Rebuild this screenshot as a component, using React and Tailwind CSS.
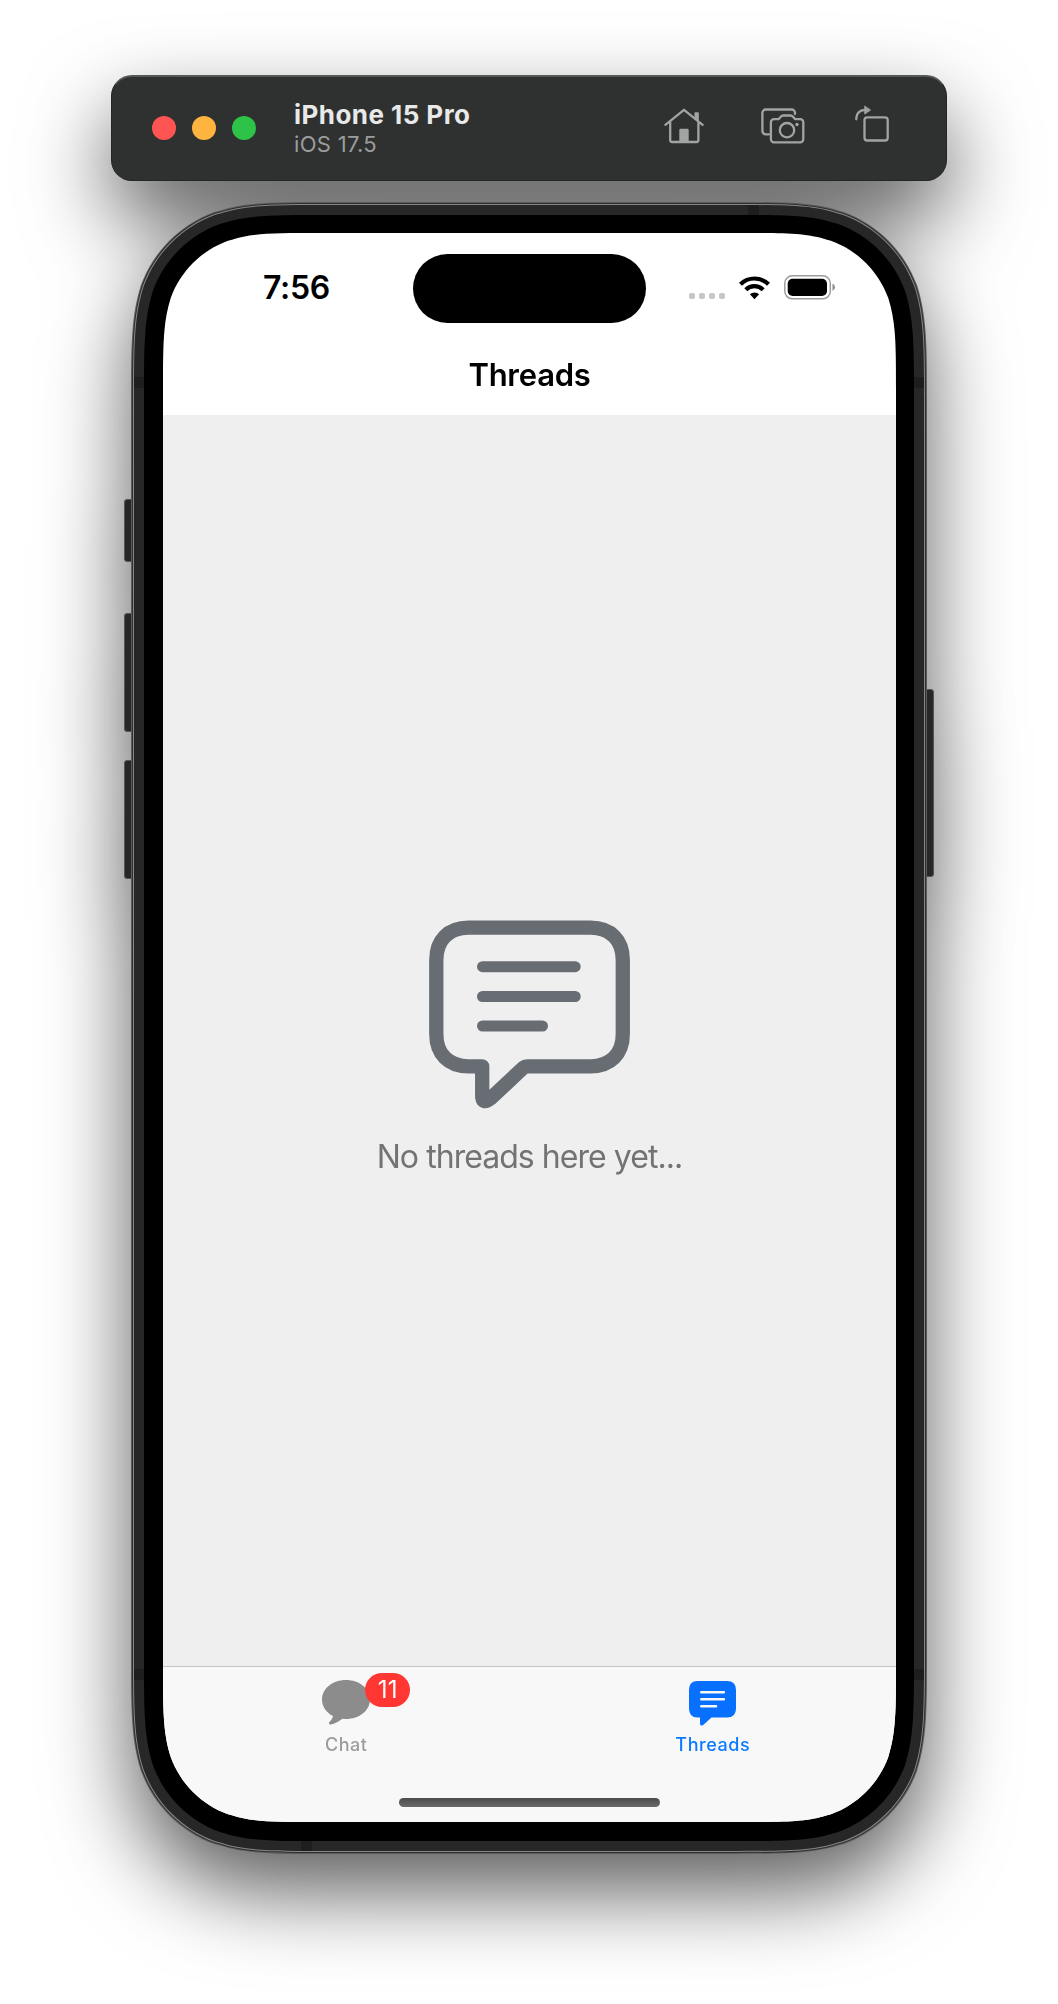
import React from "react";

// Continuous-curvature ("squircle") rounded rectangle path.
function squircle(w, h, r) {
  const seq = [
    [1.52866, 0], [1.08849, 0], [0.8684, 0], [0.66993, 0.06549],
    [0.63149, 0.07491],
    [0.37282, 0.16906], [0.16906, 0.37282], [0.07491, 0.63149],
    [0, 0.8684], [0, 1.08849], [0, 1.52866],
  ];
  const f = (n) => n.toFixed(2);
  const corner = (map, reverse) => {
    const p = (reverse ? [...seq].reverse() : seq).map(([a, b]) => map(a * r, b * r));
    const s = p.map(([x, y]) => `${f(x)} ${f(y)}`);
    return reverse
      ? `${s[0]}C${s[1]} ${s[2]} ${s[3]}C${s[4]} ${s[5]} ${s[6]}L${s[7]}C${s[8]} ${s[9]} ${s[10]}`
      : `${s[0]}C${s[1]} ${s[2]} ${s[3]}L${s[4]}C${s[5]} ${s[6]} ${s[7]}C${s[8]} ${s[9]} ${s[10]}`;
  };
  const tr = corner((a, b) => [w - a, b], false);
  const br = corner((a, b) => [w - a, h - b], true);
  const bl = corner((a, b) => [a, h - b], false);
  const tl = corner((a, b) => [a, b], true);
  return `path("M${tr}L${br}L${bl}L${tl}Z")`;
}

const shape = (w, h, r) => ({ clipPath: squircle(w, h, r) });

function HomeIcon() {
  return (
    <svg width="40" height="36" viewBox="0 0 40 36" fill="none" stroke="#a2a3a3" strokeWidth="2.300" strokeLinecap="round" strokeLinejoin="round">
      <path d="M1.400 16.800 20 1.800 38.600 16.800M6.200 14v18a2 2 0 0 0 2 2h24.200a2 2 0 0 0 2-2V14" />
      <path d="M31.300 10.500V5.200h2.700v7.500" fill="#a2a3a3" strokeWidth="1.700" />
      <path d="M16.500 20.800h7q1.200 0 1.200 1.200V34.500h-9.400V22q0-1.200 1.200-1.200Z" fill="#a2a3a3" stroke="none" />
    </svg>
  );
}

function ScreenshotIcon() {
  return (
    <svg width="44" height="36" viewBox="0 0 44 36" fill="none" stroke="#a2a3a3" strokeWidth="2.300" strokeLinejoin="round" strokeLinecap="round">
      <path d="M8 26.300H4.700a3.300 3.300 0 0 1-3.300-3.300V4.800a3.300 3.300 0 0 1 3.300-3.300h26a3.300 3.300 0 0 1 3.300 3.300V6" />
      <path d="M12.900 11.200h4.600l2.300-2.500q1-1.200 2.400-1.200h7.400q1.400 0 2.400 1.200l2.300 2.500h5a3 3 0 0 1 3 3V31.300a3 3 0 0 1-3 3H12.900a3 3 0 0 1-3-3V14.200a3 3 0 0 1 3-3Z" />
      <circle cx="26" cy="22.200" r="7.200" />
      <circle cx="36" cy="16.500" r="1.700" fill="#a2a3a3" stroke="none" />
    </svg>
  );
}

function RotateIcon() {
  return (
    <svg width="34" height="37" viewBox="0 0 34 37" fill="none" stroke="#a2a3a3" strokeWidth="2.300" strokeLinejoin="round" strokeLinecap="round">
      <path d="M1.300 14.300V13A8 8 0 0 1 9.300 5" />
      <path d="M9.700 1.300v7.800L15.400 5.200Z" fill="#a2a3a3" strokeWidth="0.800" />
      <rect x="9.500" y="12.300" width="23.200" height="23.200" rx="2.800" />
    </svg>
  );
}

function Toolbar() {
  return (
    <div className="relative z-10 flex h-[106px] w-[836px] items-center rounded-[21px] border border-t-2 border-[#242525] border-t-[#555656] bg-[#2f3130] pb-[2px] pl-10 pr-[57px]">
      <div className="flex gap-4">
        <span className="size-6 rounded-full bg-[#ff5552]" />
        <span className="size-6 rounded-full bg-[#ffb440]" />
        <span className="size-6 rounded-full bg-[#2dc348]" />
      </div>
      <div className="ml-[38px] flex-1 translate-y-px whitespace-nowrap">
        <div className="text-[26px] font-bold leading-[30px] tracking-[0.45px] text-[#e9e9e9]">iPhone 15 Pro</div>
        <div className="text-[22px] leading-[28px] tracking-[0.3px] text-[#9b9c9c]">iOS 17.5</div>
      </div>
      <div className="flex -translate-y-[2px] items-center">
        <HomeIcon />
        <div className="ml-[57px]"><ScreenshotIcon /></div>
        <div className="ml-[50px] -translate-y-[2px]"><RotateIcon /></div>
      </div>
    </div>
  );
}

function StatusBar() {
  return (
    <div className="flex h-[110px] items-center">
      <div className="ml-[100px] w-[150px] text-[32px] font-semibold leading-none tracking-[-0.3px] text-black">7:56</div>
      <div className="h-[69px] w-[233px] rounded-full bg-black" />
      <div className="ml-[43px] mt-4 flex gap-1">
        <span className="size-1.5 rounded-[2px] bg-[#c6c6c6]" />
        <span className="size-1.5 rounded-[2px] bg-[#c6c6c6]" />
        <span className="size-1.5 rounded-[2px] bg-[#c6c6c6]" />
        <span className="size-1.5 rounded-[2px] bg-[#c6c6c6]" />
      </div>
      <svg className="-mt-px ml-[14px]" width="31" height="24" viewBox="0 0 31 24" fill="none" stroke="#000" strokeWidth="4.200">
        <path d="M1.500 8.200a20 20 0 0 1 28 0" />
        <path d="M6.800 13.800a12.300 12.300 0 0 1 17.400 0" />
        <path d="M15.500 23.300 10.900 18.300a6.500 6.500 0 0 1 9.200 0Z" fill="#000" stroke="none" />
      </svg>
      <svg className="-mt-[2px] ml-[14px]" width="51" height="25" viewBox="0 0 51 25">
        <rect x="0.800" y="0.800" width="45.500" height="23" rx="7.500" fill="#fff" stroke="#9c9c9c" strokeWidth="1.500" />
        <rect x="3.700" y="3.700" width="39.300" height="17.200" rx="5" />
        <path d="M48.500 8.500q2.500 1.200 2.500 3.700t-2.500 3.700Z" fill="#8e8e8e" />
      </svg>
    </div>
  );
}

function EmptyState() {
  return (
    <div className="flex h-[1251px] flex-col items-center bg-[#efefef] pt-[505px]">
      <svg width="201" height="190" viewBox="0 0 201 190" fill="none" stroke="#686d74" strokeLinecap="round" strokeLinejoin="round">
        <path d="M53 146.300H39.500C19.500 146.300 7.300 134 7.300 114V40C7.300 20 19.500 7.700 39.500 7.700H161.500C181.500 7.700 193.800 20 193.800 40V114C193.800 134 181.500 146.300 161.500 146.300H98Q96 146.300 94.500 147.600L61.500 178.500Q54 184.500 53.200 177V146.300Z" strokeWidth="14.300" />
        <path d="M53.500 46.700h92.700M53.500 76.500h92.700M53.500 106h60" strokeWidth="11" />
      </svg>
      <div className="mt-[27px] whitespace-nowrap text-[32px] leading-[40px] tracking-[-0.95px] text-[#737373]">No threads here yet...</div>
    </div>
  );
}

function TabBar() {
  return (
    <div className="flex h-[156px] flex-col border-t border-[#c4c4c4] bg-[#f8f8f8]">
      <div className="flex h-[131px] text-center text-[18px] font-medium leading-[22px] tracking-[0.55px]">
        <div className="flex flex-1 flex-col items-center pt-[13px] text-[#9c9c9c]">
          <div className="relative">
            <svg width="48" height="45" viewBox="0 0 48 45" fill="#8c8c8c">
              <path d="M24 0C37.500 0 48 8.600 48 19.500S37.500 39 24 39Q22 39 20.500 38.800C16.500 41.800 12.500 44 9 44.500Q6.500 44.800 7 42.500C8.500 41 10.500 38.600 11 36C4.500 32.700 0 26.700 0 19.500C0 8.600 10.500 0 24 0Z" />
            </svg>
            <div className="absolute -top-[7px] left-[43px] flex h-[34px] w-[45px] items-center justify-center rounded-full bg-[#ff3632] text-[24px] font-normal tracking-[0.3px] text-white">11</div>
          </div>
          <div className="mt-[9px]">Chat</div>
        </div>
        <div className="flex flex-1 flex-col items-center pt-[14px] text-[#0b7aff]">
          <svg width="47" height="45" viewBox="0.500 0 47 45">
            <path d="M9 0H38.500Q47.500 0 47.500 9V27.500Q47.500 36.500 38.500 36.500H23L15 43.700Q11.500 46 11.500 42.500V36.500H9Q.5 36.500 .5 27.500V9Q.5 0 9 0Z" fill="#0870ff" />
            <path d="M12.800 11.200h22.500M12.800 18.200h22.500M12.800 25.200h14.700" stroke="#f8f8f8" strokeWidth="2.600" strokeLinecap="round" />
          </svg>
          <div className="mt-2">Threads</div>
        </div>
      </div>
      <div className="h-[9px] w-[261px] shrink-0 self-center rounded-full bg-gradient-to-b from-[#4c4c4c] to-[#6a6a6a]" />
    </div>
  );
}

function Phone() {
  return (
    <div className="relative">
      {/* side buttons */}
      <div className="absolute -left-[7px] top-[297px] h-[63px] w-[10px] rounded-[3px] border border-[#555] bg-[#272727]" />
      <div className="absolute -left-[7px] top-[411px] h-[119px] w-[10px] rounded-[3px] border border-[#555] bg-[#272727]" />
      <div className="absolute -left-[7px] top-[558px] h-[119px] w-[10px] rounded-[3px] border border-[#555] bg-[#272727]" />
      <div className="absolute -right-[7px] top-[487px] h-[188px] w-[11px] rounded-[3px] border border-[#555] bg-[#272727]" />
      <div className="h-[1652px] w-[796px] bg-[#5c5c5c] p-px" style={shape(796, 1652, 132)}>
        <div className="h-[1650px] w-[794px] bg-[#303030] p-px" style={shape(794, 1650, 131)}>
          <div className="h-[1648px] w-[792px] bg-[#868686] p-px" style={shape(792, 1648, 130)}>
            <div className="relative h-[1646px] w-[790px] bg-[#272727] px-[10px] pt-[10px]" style={shape(790, 1646, 129)}>
              {/* antenna bands */}
              <div className="absolute left-[614px] top-0 h-[10px] w-[11px] bg-[#1e1e1e]" />
              <div className="absolute bottom-0 left-[167px] h-[10px] w-[11px] bg-[#1e1e1e]" />
              <div className="absolute left-0 top-[172px] h-[11px] w-full bg-[#1e1e1e]" />
              <div className="absolute left-0 top-[1464px] h-[11px] w-full bg-[#1e1e1e]" />
              <div className="relative h-[1626px] w-[770px] bg-black pl-[19px] pt-[18px]" style={shape(770, 1626, 120)}>
                <div className="h-[1589px] w-[733px] bg-white" style={shape(733, 1589, 103)}>
                  <StatusBar />
                  <div className="flex h-[72px] items-center justify-center pb-2 text-[31px] font-semibold tracking-[-0.25px] text-black">Threads</div>
                  <EmptyState />
                  <TabBar />
                </div>
              </div>
            </div>
          </div>
        </div>
      </div>
    </div>
  );
}

export default function App() {
  return (
    <div className="h-[2004px] w-[1058px] overflow-hidden bg-white pt-[75px] font-['Inter',sans-serif]">
      <div className="flex flex-col items-center gap-[21px] drop-shadow-[0_38px_42px_rgba(0,0,0,0.63)]">
        <Toolbar />
        <Phone />
      </div>
    </div>
  );
}
